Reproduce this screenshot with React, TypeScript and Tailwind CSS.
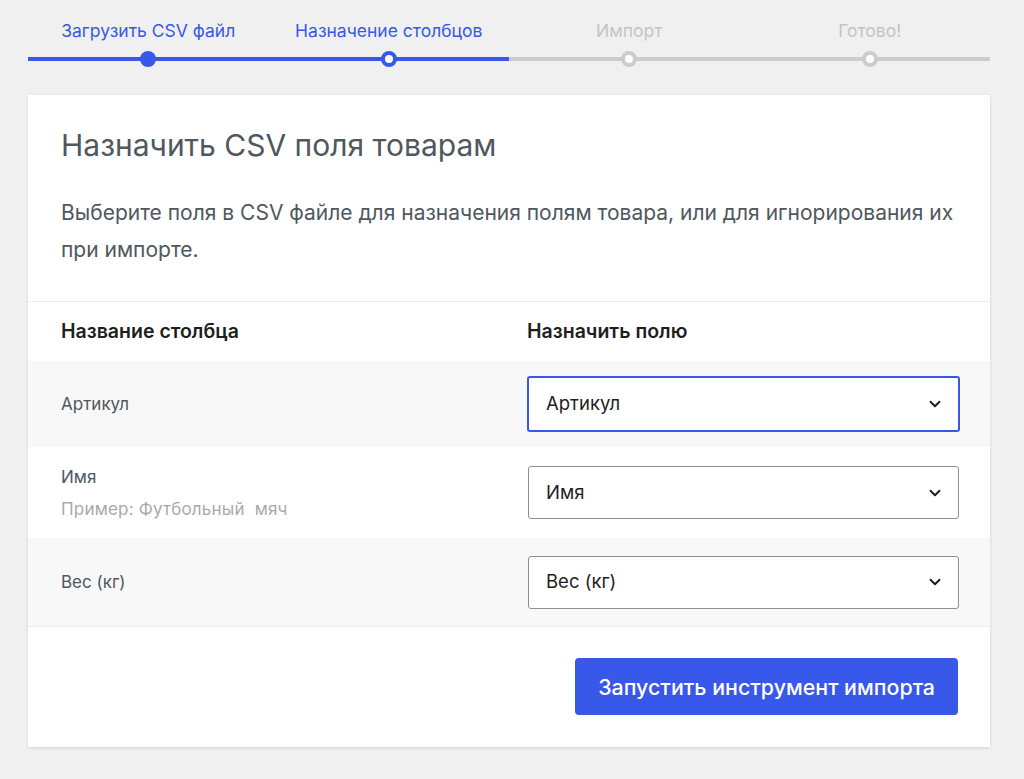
import { ChevronDown } from "lucide-react";

const steps = [
  { label: "Загрузить CSV файл", state: "done" },
  { label: "Назначение столбцов", state: "active" },
  { label: "Импорт", state: "todo" },
  { label: "Готово!", state: "todo" },
];

const rows = [
  { name: "Артикул", example: "", value: "Артикул", focused: true },
  { name: "Имя", example: "Пример: Футбольный  мяч", value: "Имя", focused: false },
  { name: "Вес (кг)", example: "", value: "Вес (кг)", focused: false },
];

function Stepper() {
  return (
    <ol className="flex">
      {steps.map((s) => {
        const blue = s.state !== "todo";
        return (
          <li key={s.label} className="flex flex-1 flex-col items-center">
            <span
              className={`h-[22px] text-[17.5px] leading-[22px] ${
                blue ? "text-[#3858e9]" : "text-[#c3c4c7]"
              }`}
            >
              {s.label}
            </span>
            <div className="relative mt-[9px] h-4 w-full">
              <div
                className={`absolute left-0 right-0 top-[6px] h-1 ${
                  blue ? "bg-[#3858e9]" : "bg-[#cccccc]"
                }`}
              />
              <div
                className={`absolute left-1/2 top-0 h-4 w-4 -translate-x-1/2 rounded-full ${
                  s.state === "done"
                    ? "bg-[#3858e9]"
                    : s.state === "active"
                      ? "border-[4px] border-[#3858e9] bg-white"
                      : "border-[4px] border-[#cccccc] bg-white"
                }`}
              />
            </div>
          </li>
        );
      })}
    </ol>
  );
}

export default function App() {
  return (
    <div
      className="min-h-[779px] bg-[#f0f0f0] pl-[28px] pr-[34px] pt-[20px] text-[#50575e]"
      style={{ fontFamily: "Inter, 'Noto Sans', sans-serif" }}
    >
      <Stepper />

      <div className="mt-[28px] bg-white shadow-[0_1px_3px_rgba(0,0,0,0.13)]">
        <header className="border-b border-[#ececec] pl-[33px] pr-[30px] pb-[33px] pt-[32px]">
          <h2 className="text-[30px] leading-[36px] font-normal text-[#50575e]">
            Назначить CSV поля товарам
          </h2>
          <p className="mt-[31px] text-[21px] leading-[37px] text-[#50575e]">
            Выберите поля в CSV файле для назначения полям товара, или для игнорирования их
            при импорте.
          </p>
        </header>

        <div className="grid grid-cols-[466px_1fr] pl-[33px] pr-[30px] pb-[15px] pt-[15px] text-[19.5px] font-semibold text-[#1e1e1e]">
          <span>Название столбца</span>
          <span>Назначить полю</span>
        </div>

        {rows.map((r, i) => (
          <div
            key={r.name}
            className={`grid grid-cols-[466px_1fr] items-center pl-[33px] pr-[30px] ${
              i % 2 === 0 ? "bg-[#f8f8f8]" : "bg-white"
            } ${i === 0 ? "h-[86px]" : i === 1 ? "h-[91px]" : "h-[88px]"}`}
          >
            <div className="flex flex-col">
              <span className="text-[17px] leading-[22px] text-[#50575e]">{r.name}</span>
              {r.example && (
                <span className="mt-[10px] whitespace-pre text-[17px] leading-[22px] tracking-[0.2px] text-[#a7aaad]">
                  {r.example}
                </span>
              )}
            </div>
            <div
              className={`flex items-center justify-between rounded-[3px] bg-white pl-[17px] pr-[14px] text-[18.5px] text-[#1e1e1e] ${
                r.focused
                  ? "h-[56px] border-2 border-[#3858e9]"
                  : "mx-[1px] h-[53px] border border-[#8c8f94]"
              }`}
            >
              <span>{r.value}</span>
              <ChevronDown className="h-[18px] w-[18px]" strokeWidth={2.5} />
            </div>
          </div>
        ))}

        <footer className="flex justify-end border-t border-[#ececec] px-[32px] pb-[32px] pt-[31px]">
          <button className="h-[57px] rounded-[4px] bg-[#3858e9] px-[23px] text-[21.4px] font-medium text-white">
            Запустить инструмент импорта
          </button>
        </footer>
      </div>
    </div>
  );
}
